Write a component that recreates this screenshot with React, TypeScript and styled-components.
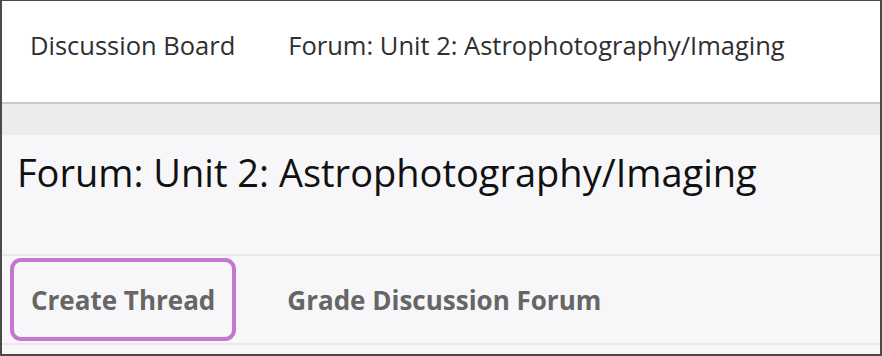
import styled, { createGlobalStyle } from 'styled-components';

const GlobalStyle = createGlobalStyle`
  html, body {
    margin: 0;
    padding: 0;
    background: #ffffff;
  }
  * {
    box-sizing: border-box;
  }
`;

const Frame = styled.div`
  width: 882px;
  height: 356px;
  border: 2px solid #4a4a4a;
  border-top-width: 1px;
  display: flex;
  flex-direction: column;
  font-family: 'Open Sans', 'Liberation Sans', sans-serif;
  overflow: hidden;
`;

const Breadcrumbs = styled.nav`
  height: 103px;
  flex: none;
  background: #ffffff;
  border-bottom: 2px solid #c9c9cb;
  display: flex;
  align-items: center;
  gap: 53px;
  padding: 0 0 13px 28px;
`;

const Crumb = styled.span`
  font-size: 25.5px;
  color: #2f2f2f;
  white-space: nowrap;
`;

const Band = styled.div`
  height: 31px;
  flex: none;
  background: #ececee;
`;

const Content = styled.main`
  flex: 1;
  background: #f7f7f9;
  display: flex;
  flex-direction: column;
`;

const Title = styled.h1`
  margin: 0;
  height: 121px;
  padding: 11px 0 0 15px;
  font-size: 38px;
  font-weight: 400;
  color: #111111;
  white-space: nowrap;
  border-bottom: 2px solid #e8e8ea;
`;

const Toolbar = styled.div`
  height: 89px;
  display: flex;
  align-items: center;
  gap: 51px;
  padding-left: 8px;
  border-bottom: 2px solid #e9e9eb;
`;

const Action = styled.button<{ $focused?: boolean }>`
  height: 83px;
  padding: 0 ${(p) => (p.$focused ? '17px' : '0')};
  border: ${(p) => (p.$focused ? '4px solid #c476d0' : 'none')};
  border-radius: 11px;
  background: transparent;
  font-family: inherit;
  font-size: 26px;
  font-weight: 700;
  color: #666666;
  white-space: nowrap;
  cursor: pointer;
`;

export default function App() {
  return (
    <>
      <GlobalStyle />
      <Frame>
        <Breadcrumbs>
          <Crumb>Discussion Board</Crumb>
          <Crumb>Forum: Unit 2: Astrophotography/Imaging</Crumb>
        </Breadcrumbs>
        <Band />
        <Content>
          <Title>Forum: Unit 2: Astrophotography/Imaging</Title>
          <Toolbar>
            <Action $focused>Create Thread</Action>
            <Action>Grade Discussion Forum</Action>
          </Toolbar>
        </Content>
      </Frame>
    </>
  );
}
